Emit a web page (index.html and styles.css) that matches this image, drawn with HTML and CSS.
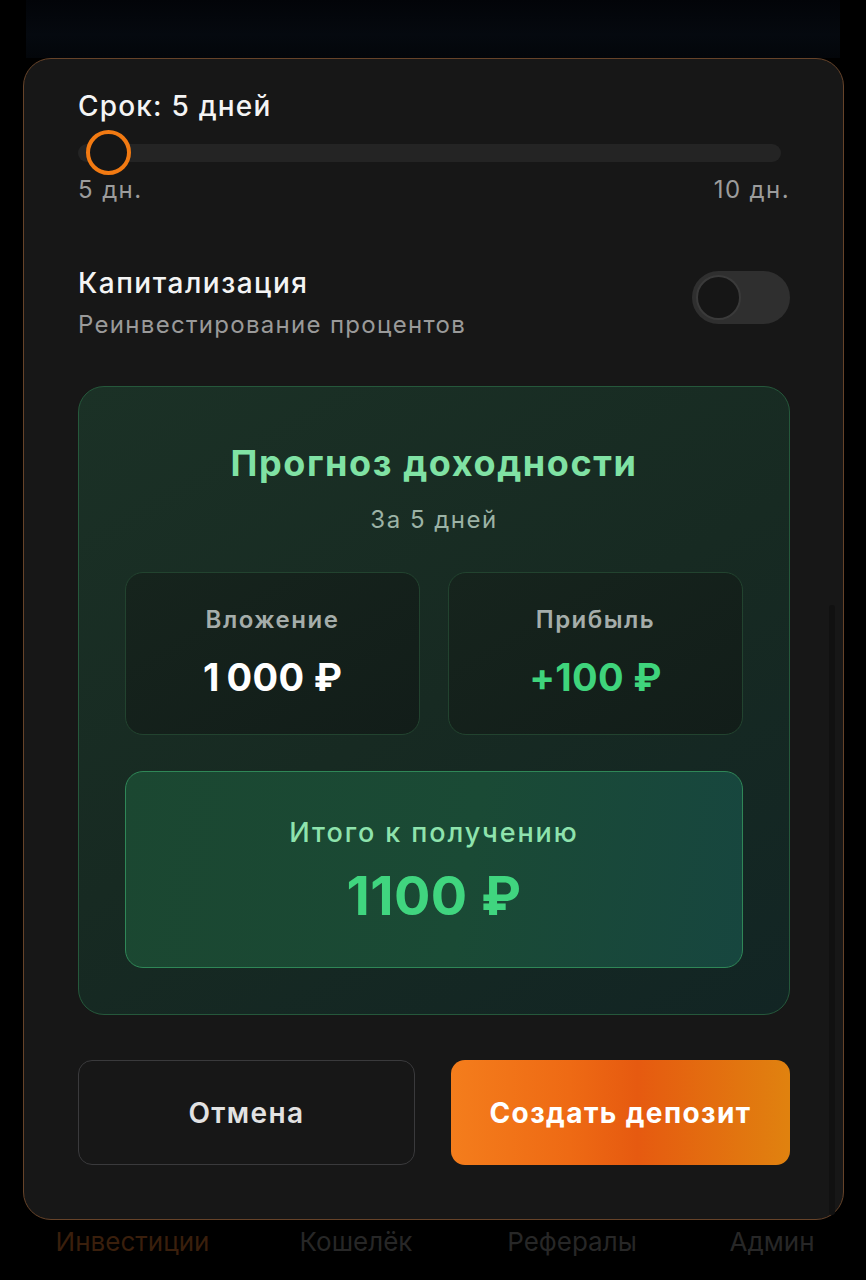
FILE: index.html
```html
<!DOCTYPE html>
<html lang="ru">
<head>
<meta charset="utf-8">
<title>Депозит</title>
<link rel="stylesheet" href="styles.css">
</head>
<body>
<div class="app">
  <div class="app-top"></div>
  <section class="sheet">
    <div class="scrollbar"></div>
    <h2 class="term-title">Срок: 5 дней</h2>
    <div class="slider">
      <div class="slider-track"></div>
      <div class="slider-thumb"></div>
    </div>
    <div class="slider-labels">
      <span>5 дн.</span>
      <span>10 дн.</span>
    </div>

    <div class="option-row">
      <div class="option-text">
        <div class="option-title">Капитализация</div>
        <div class="option-sub">Реинвестирование процентов</div>
      </div>
      <div class="toggle"><div class="toggle-knob"></div></div>
    </div>

    <div class="forecast">
      <h3 class="forecast-title">Прогноз доходности</h3>
      <div class="forecast-sub">За 5 дней</div>
      <div class="forecast-grid">
        <div class="stat">
          <div class="stat-label">Вложение</div>
          <div class="stat-value">1<span class="num-gap"></span>000 ₽</div>
        </div>
        <div class="stat">
          <div class="stat-label">Прибыль</div>
          <div class="stat-value green">+100 ₽</div>
        </div>
      </div>
      <div class="total">
        <div class="total-label">Итого к получению</div>
        <div class="total-value">1100 ₽</div>
      </div>
    </div>

    <div class="actions">
      <button class="btn btn-cancel">Отмена</button>
      <button class="btn btn-primary">Создать депозит</button>
    </div>
  </section>
  <nav class="nav">
    <span class="nav-item active">Инвестиции</span>
    <span class="nav-item">Кошелёк</span>
    <span class="nav-item">Рефералы</span>
    <span class="nav-item">Админ</span>
  </nav>
</div>
</body>
</html>
```
FILE: styles.css
```css
* { box-sizing: border-box; }
html, body { margin: 0; padding: 0; }
body {
  background: #000;
  width: 866px;
  height: 1280px;
  overflow: hidden;
  font-family: Inter, "Noto Sans", sans-serif;
  color: #f4f4f4;
}
.app {
  display: flex;
  flex-direction: column;
  height: 1280px;
}
.app-top {
  height: 58px;
  margin: 0 26px;
  background: linear-gradient(180deg, #020408 0%, #05090f 60%, #03060a 100%);
  flex: none;
}
.sheet {
  position: relative;
  margin: 0 22px 0 23px;
  height: 1162px;
  flex: none;
  background: #171717;
  border: 1.5px solid #664329;
  border-radius: 28px;
  padding: 30px 53px 0 54px;
}
.scrollbar {
  position: absolute;
  right: 8px;
  top: 546px;
  width: 6px;
  height: 610px;
  background: #111111;
  border-radius: 3px;
}
.term-title {
  margin: 0;
  font-size: 28px;
  line-height: 34px;
  font-weight: 500;
  letter-spacing: 1.2px;
}
.slider {
  position: relative;
  height: 46px;
  margin-top: 7px;
  display: flex;
  align-items: center;
}
.slider-track {
  height: 18px;
  width: 703px;
  border-radius: 9px;
  background: #242424;
}
.slider-thumb {
  position: absolute;
  left: 8px;
  top: 0;
  width: 45px;
  height: 45px;
  border-radius: 50%;
  border: 4px solid #f27a12;
  background: #161616;
}
.slider-labels {
  display: flex;
  justify-content: space-between;
  font-size: 24px;
  line-height: 28px;
  letter-spacing: 1.4px;
  color: #9c9c9c;
}
.option-row {
  margin-top: 62px;
  display: flex;
  align-items: center;
  justify-content: space-between;
}
.option-title {
  font-size: 28px;
  line-height: 34px;
  font-weight: 500;
  letter-spacing: 1.5px;
}
.option-sub {
  margin-top: 11px;
  font-size: 24px;
  line-height: 28px;
  letter-spacing: 1.3px;
  color: #9a9a9a;
}
.toggle {
  width: 98px;
  height: 53px;
  border-radius: 27px;
  background: #2f2f2f;
  padding: 4px;
  margin-top: -10px;
}
.toggle-knob {
  width: 45px;
  height: 45px;
  border-radius: 50%;
  background: #161616;
  border: 2px solid #3a3a3a;
}
.forecast {
  margin-top: 47px;
  border: 1.5px solid #25583b;
  border-radius: 26px;
  background: linear-gradient(150deg, #1b3126 0%, #172a22 50%, #122524 100%);
  padding: 54px 46px 46px;
  text-align: center;
}
.forecast-title {
  margin: 0;
  font-size: 36px;
  line-height: 44px;
  font-weight: 700;
  letter-spacing: 1.6px;
  color: #80e2a4;
}
.forecast-sub {
  margin-top: 21px;
  font-size: 24px;
  line-height: 28px;
  letter-spacing: 1.5px;
  color: #9cb3a6;
}
.forecast-grid {
  margin-top: 38px;
  display: grid;
  grid-template-columns: 1fr 1fr;
  gap: 28px;
}
.stat {
  height: 163px;
  border: 1.5px solid #22432f;
  border-radius: 18px;
  background: linear-gradient(150deg, #16241d 0%, #121d19 100%);
  padding-top: 33px;
}
.stat-label {
  font-size: 24px;
  line-height: 28px;
  font-weight: 600;
  letter-spacing: 1.5px;
  color: #a5adaa;
}
.stat-value {
  margin-top: 20px;
  font-size: 38px;
  line-height: 46px;
  font-weight: 700;
  letter-spacing: 0.3px;
  color: #ffffff;
}
.num-gap {
  display: inline-block;
  width: 7px;
}
.stat-value.green { color: #3fd47c; }
.total {
  margin-top: 36px;
  height: 197px;
  border: 1.5px solid #2f8757;
  border-radius: 18px;
  background: linear-gradient(100deg, #1b4731 0%, #1a4a35 55%, #17463f 100%);
  padding-top: 45px;
}
.total-label {
  font-size: 27px;
  line-height: 32px;
  font-weight: 500;
  letter-spacing: 1.9px;
  color: #8ee3ad;
}
.total-value {
  margin-top: 17px;
  font-size: 54px;
  line-height: 60px;
  font-weight: 700;
  letter-spacing: 0.5px;
  color: #40d57f;
}
.actions {
  margin-top: 45px;
  display: grid;
  grid-template-columns: 337px 339px;
  justify-content: space-between;
}
.btn {
  height: 105px;
  border-radius: 14px;
  font-family: Inter, "Noto Sans", sans-serif;
  font-size: 28px;
  font-weight: 600;
  letter-spacing: 1.4px;
  cursor: pointer;
}
.btn-cancel {
  background: #171717;
  border: 1.5px solid #3a3a3c;
  color: #e2e2e2;
}
.btn-primary {
  border: none;
  color: #fff;
  font-weight: 700;
  background: linear-gradient(90deg, #f47d1c 0%, #ee6a14 35%, #e65a10 55%, #e0820f 100%);
}
.nav {
  display: flex;
  padding: 6px 0 0;
}
.nav-item {
  font-size: 26px;
  line-height: 32px;
  color: #272727;
  text-align: center;
}
.nav-item:nth-child(1) { width: 265px; color: #3a1f0c; }
.nav-item:nth-child(2) { width: 182px; }
.nav-item:nth-child(3) { width: 250px; }
.nav-item:nth-child(4) { width: 150px; }
```
